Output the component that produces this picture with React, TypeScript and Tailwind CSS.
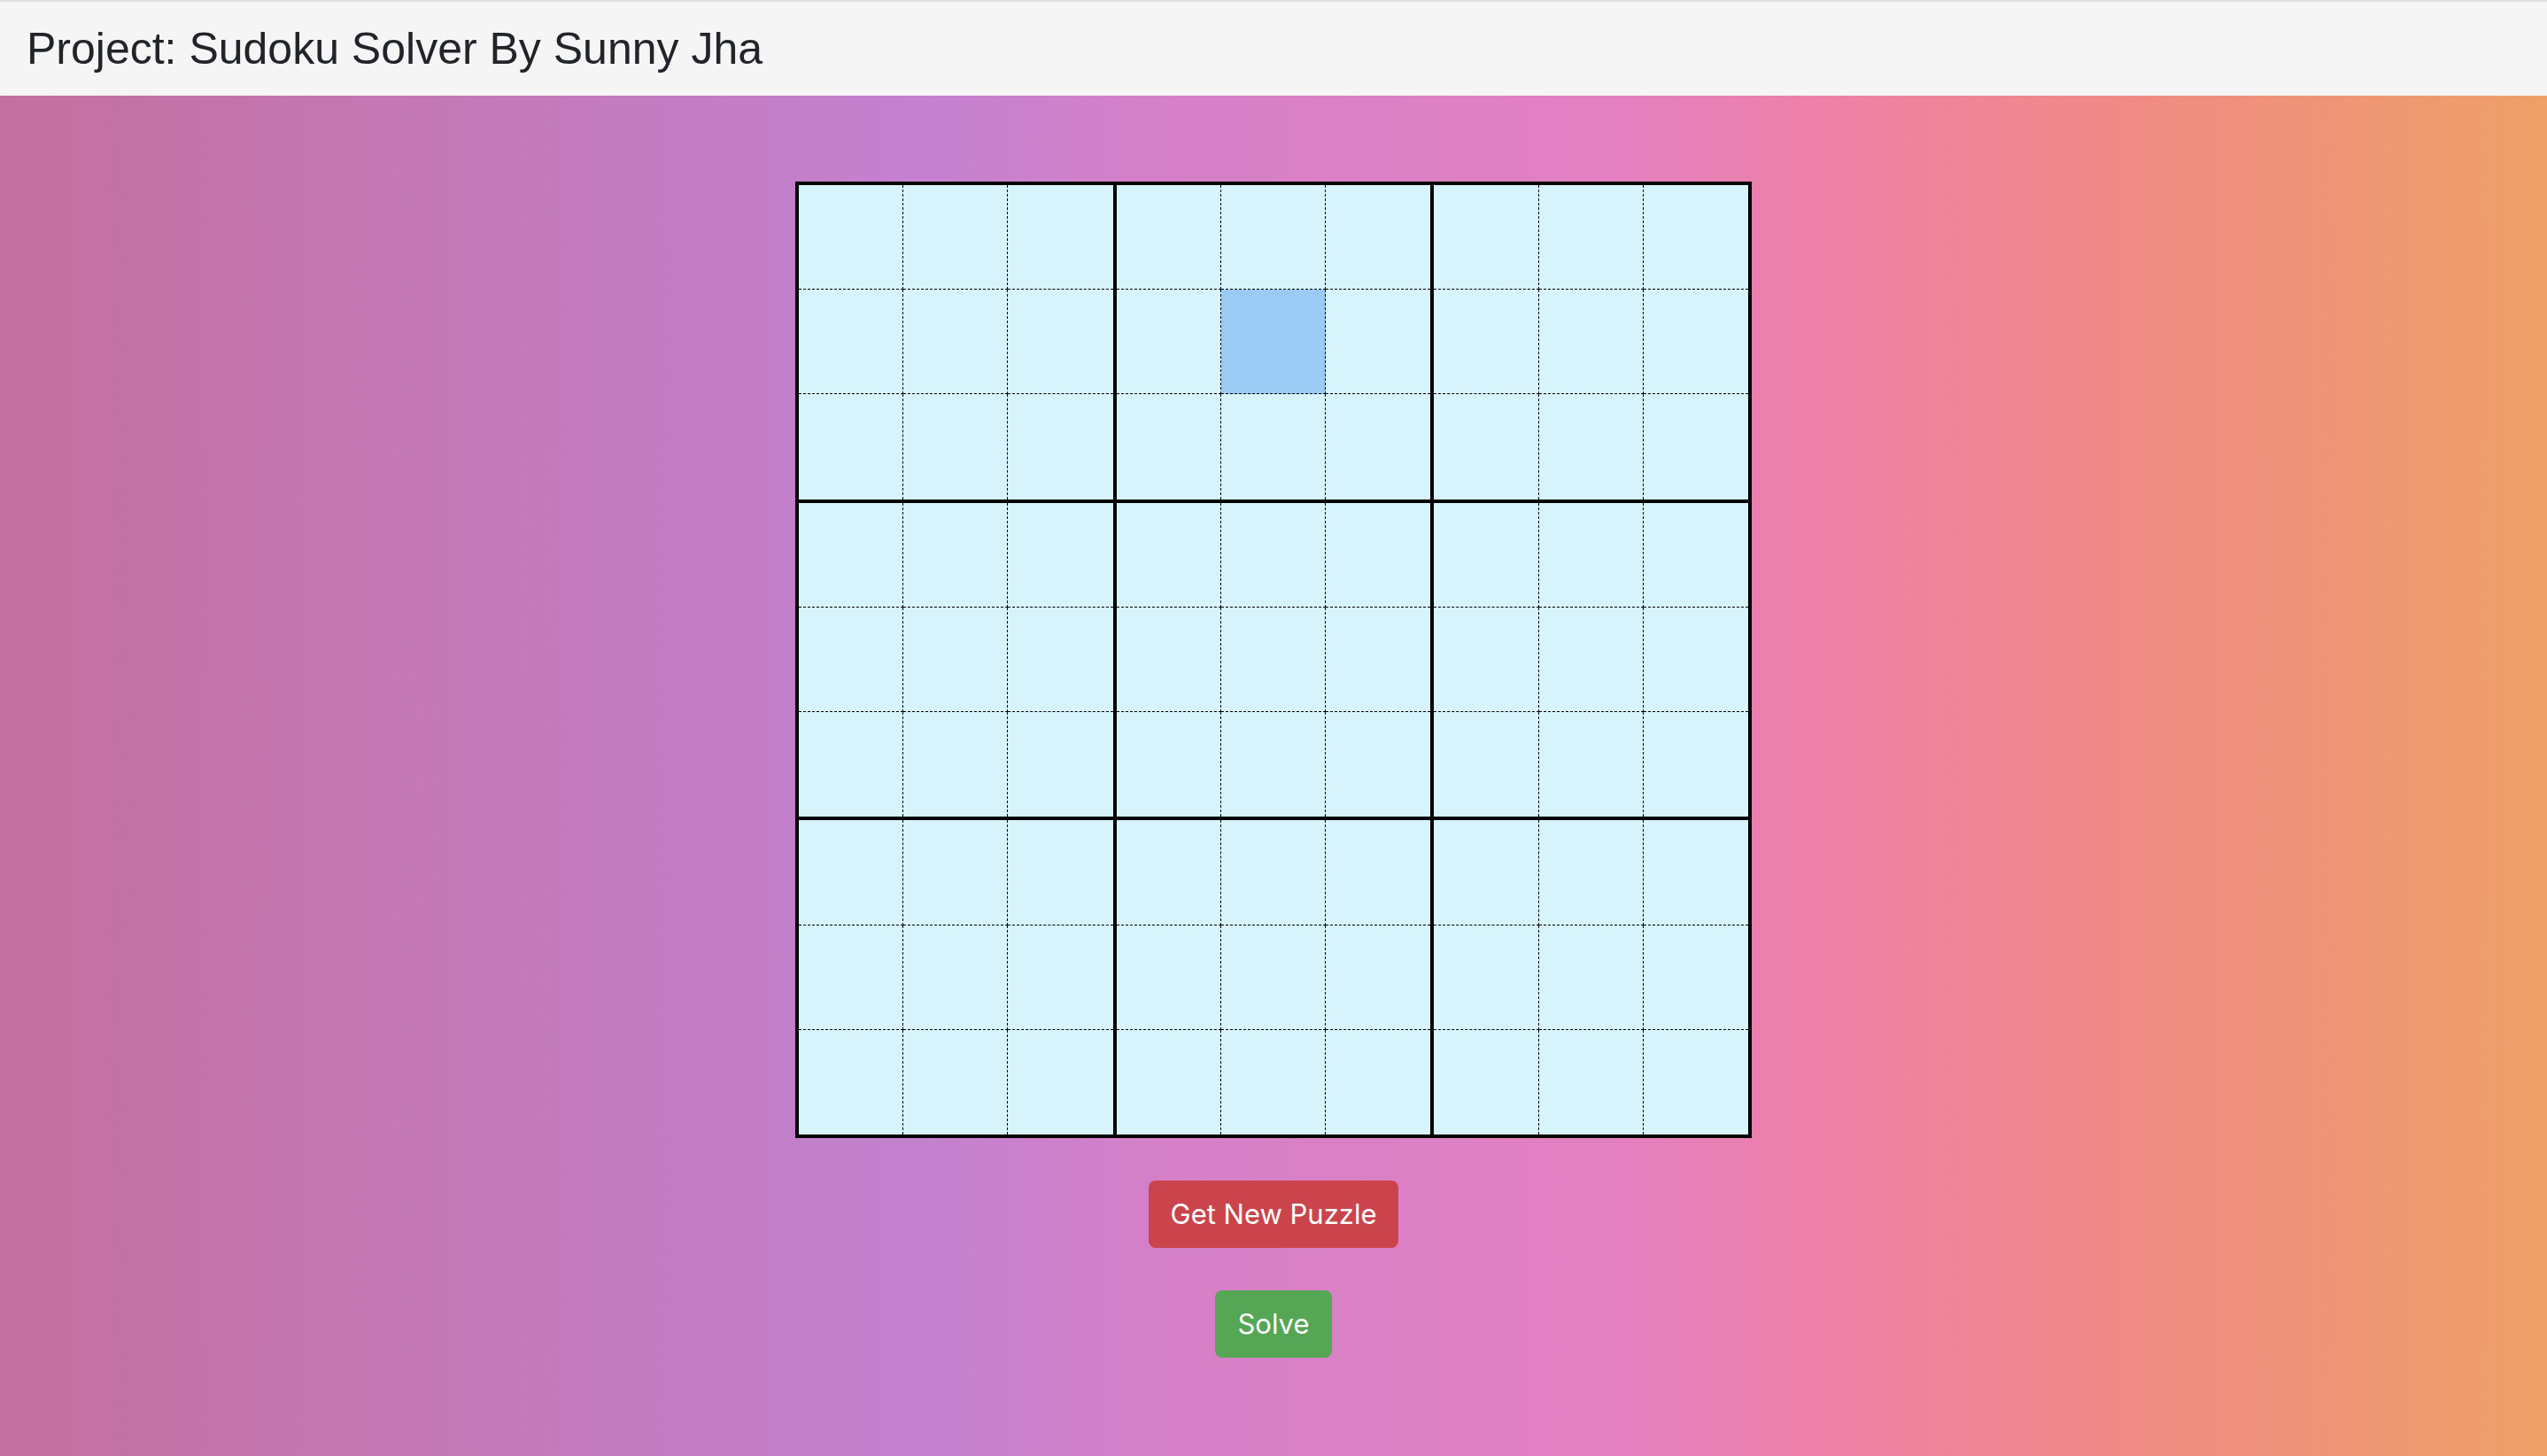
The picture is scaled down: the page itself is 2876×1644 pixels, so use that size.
const BOXES = Array.from({ length: 9 }, (_, i) => i);
const CELLS = Array.from({ length: 9 }, (_, i) => i);

// selected cell: box 1 (top-middle), centre cell of its middle row
const SELECTED = { box: 1, cell: 4 };

function Cell({ box, cell }: { box: number; cell: number }) {
  const row = Math.floor(cell / 3);
  const col = cell % 3;
  const selected = box === SELECTED.box && cell === SELECTED.cell;
  return (
    <div
      className={[
        "border-dashed border-black",
        col < 2 ? "border-r" : "",
        row < 2 ? "border-b" : "",
        selected ? "bg-[#99cbf5]" : "bg-[#d7f3fc]",
      ].join(" ")}
    />
  );
}

export default function App() {
  return (
    <div className="flex min-h-screen flex-col font-['Liberation_Sans',Arial,sans-serif]">
      <header className="flex h-[108px] items-center border-t-2 border-[#dedede] bg-[#f5f5f5] px-[30px]">
        <h1 className="text-[50px] leading-none text-[#212529]">
          Project: Sudoku Solver By Sunny Jha
        </h1>
      </header>

      <main className="flex flex-1 flex-col items-center bg-[linear-gradient(90deg,#c4709f_0%,#c381cf_36%,#d480c8_45%,#e380c2_63%,#ef80a6_72%,#f08a86_83%,#eea067_100%)] pt-[97px] pb-[100px]">
        <div className="grid h-[1080px] w-[1080px] grid-cols-3 gap-[4px] border-4 border-black bg-black">
          {BOXES.map((box) => (
            <div key={box} className="grid grid-cols-3 grid-rows-3">
              {CELLS.map((cell) => (
                <Cell key={cell} box={box} cell={cell} />
              ))}
            </div>
          ))}
        </div>

        <button className="mt-[48px] h-[76px] w-[282px] rounded-[8px] bg-[#cb444b] font-['Inter',sans-serif] text-[31px] text-white">
          Get New Puzzle
        </button>
        <button className="mt-[48px] h-[76px] w-[132px] rounded-[8px] bg-[#55a655] font-['Inter',sans-serif] text-[31px] text-white">
          Solve
        </button>
      </main>
    </div>
  );
}
